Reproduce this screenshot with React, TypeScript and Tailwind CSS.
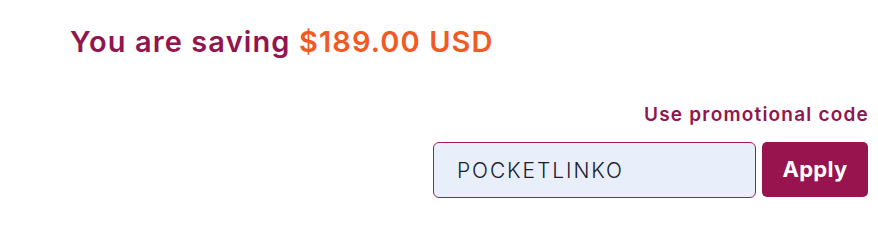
import React from "react";

export default function App() {
  return (
    <div className="w-[878px] h-[231px] bg-white flex flex-col" style={{ fontFamily: 'Inter, sans-serif' }}>
      <div className="pl-[70px] pt-[22px]">
        <h2 className="text-[29px] leading-[40px] font-semibold text-[#93154f] tracking-[1.1px]">
          You are saving <span className="text-[#f15a24]">$189.00 USD</span>
        </h2>
      </div>
      <div className="flex flex-col items-end pr-[9px] mt-[41px]">
        <div className="text-[19px] leading-[24px] font-semibold text-[#93154f] tracking-[1.2px]">Use promotional code</div>
        <div className="flex gap-[6px] mt-[15px] mr-[1px]">
          <input
            readOnly
            value="POCKETLINKO"
            className="w-[323px] h-[56px] rounded-[6px] border border-[#9b1d5a] bg-[#e8effb] pl-[23px] text-[21px] font-light text-[#1c1c2c] tracking-[1.9px] outline-none"
            style={{ fontFamily: 'Inter, sans-serif' }}
          />
          <button className="w-[106px] h-[55px] rounded-[5px] bg-[#97144f] text-white text-[22px] font-bold tracking-[0.3px]">
            Apply
          </button>
        </div>
      </div>
    </div>
  );
}
